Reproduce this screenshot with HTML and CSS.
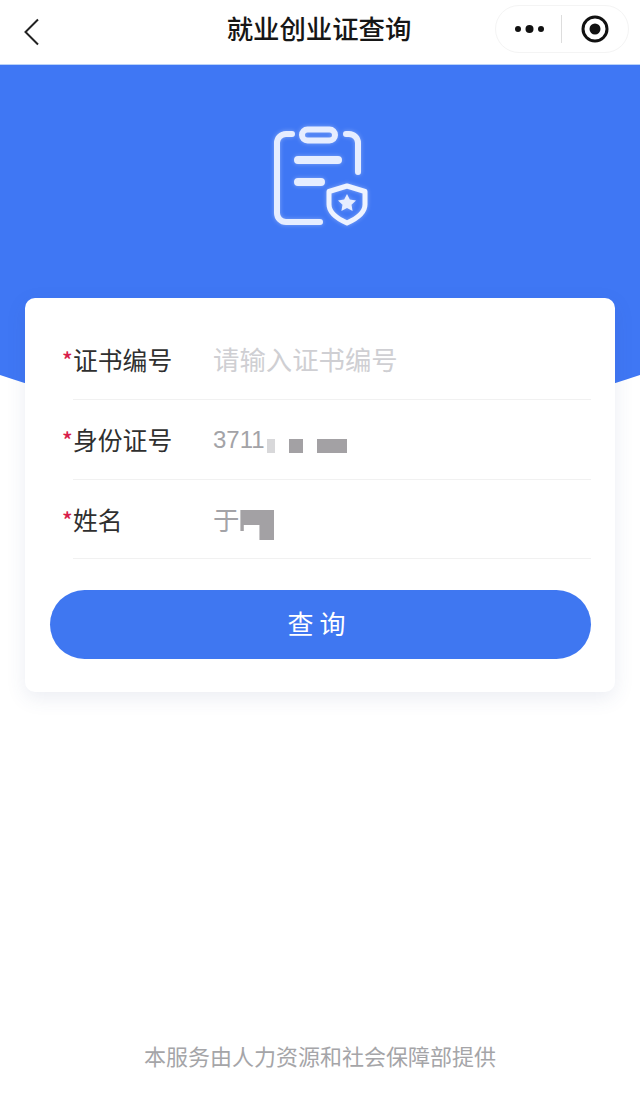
FILE: index.html
```html
<!DOCTYPE html>
<html lang="zh">
<head>
<meta charset="utf-8">
<title>就业创业证查询</title>
<link rel="stylesheet" href="styles.css">
</head>
<body>
<header class="nav">
  <svg class="back" width="20" height="30" viewBox="0 0 20 30"><path d="M16 2.500 3.500 15 16 27.500" fill="none" stroke="#222" stroke-width="2"/></svg>
  <h1 class="title">就业创业证查询</h1>
  <div class="capsule">
    <svg width="32" height="10" viewBox="0 0 32 10"><circle cx="4" cy="5" r="3" fill="#111"/><circle cx="15.500" cy="5" r="4" fill="#111"/><circle cx="27" cy="5" r="3" fill="#111"/></svg>
    <span class="divider"></span>
    <svg width="30" height="30" viewBox="0 0 30 30"><circle cx="15" cy="15" r="12" fill="none" stroke="#111" stroke-width="3"/><circle cx="15" cy="15" r="5.500" fill="#111"/></svg>
  </div>
</header>
<main class="page">
  <section class="hero">
    <svg class="hero-icon" width="100" height="102" viewBox="270 125 100 102">
      <g fill="none" stroke="#e6edff" stroke-width="6" stroke-linecap="round" stroke-linejoin="round">
        <path d="M292 134h-6a9 9 0 0 0-9 9v70a9 9 0 0 0 9 9h34"/>
        <path d="M346 134h3a9 9 0 0 1 9 9v29"/>
        <rect x="302" y="129.500" width="33" height="11" rx="5.500"/>
        <path d="M298 160h40M298 182h23" stroke-width="8"/>
        <path d="M347 186l18 5.500v13c0 8-8 14-18 18.500-10-4.500-18-10.500-18-18.500v-13z" stroke="#eef3ff" stroke-width="5"/>
      </g>
      <path d="M347 194l2.800 5.600 6.200.8-4.500 4.300 1.100 6.300-5.600-3-5.600 3 1.100-6.300-4.500-4.300 6.200-.8z" fill="#e6edff"/>
    </svg>
  </section>
  <section class="card">
    <div class="row">
      <label class="label"><span class="req">*</span>证书编号</label>
      <span class="value placeholder">请输入证书编号</span>
    </div>
    <div class="row">
      <label class="label"><span class="req">*</span>身份证号</label>
      <span class="value"><span class="digits">3711</span><i class="mask m1"></i><i class="mask m2"></i><i class="mask m3"></i></span>
    </div>
    <div class="row">
      <label class="label"><span class="req">*</span>姓名</label>
      <span class="value name">于<i class="mask m4"></i></span>
    </div>
    <button class="submit"><span class="submit-text">查 询</span></button>
  </section>
  <footer class="foot">本服务由人力资源和社会保障部提供</footer>
</main>
</body>
</html>
```
FILE: styles.css
```css
* { box-sizing: border-box; }
html, body { margin: 0; height: 1094px; overflow: hidden; background: #fff; }
body { font-family: "Noto Sans CJK SC", "Liberation Sans", sans-serif; }
.nav { height: 65px; position: relative; display: flex; align-items: center; justify-content: center; background: #fff; border-bottom: 1px solid #b9d2f8; }
.back { position: absolute; left: 22px; top: 17px; }
.title { margin: 0 0 8px -2px; font-size: 26.400px; font-weight: 500; color: #161616; line-height: 1; }
.capsule { position: absolute; left: 495px; top: 5px; width: 134px; height: 48px; border: 1px solid #f4f4f4; border-radius: 24px; display: flex; align-items: center; padding-left: 18px; }
.divider { width: 1px; height: 28px; background: #ddd; margin: 0 18px 0 15px; }
.page { position: relative; height: 1029px; display: flex; flex-direction: column; align-items: center; }
.hero { position: absolute; left: 0; top: 0; width: 640px; height: 360px; background: #3f77f4; clip-path: ellipse(630px 360px at 50% 0); display: flex; justify-content: center; align-items: flex-start; padding-top: 60px; }
.hero-icon { filter: blur(.5px) drop-shadow(0 0 2px rgba(255,255,255,.35)); }
.card { position: relative; margin-top: 233px; width: 590px; height: 394px; background: #fff; border-radius: 10px; box-shadow: 0 6px 20px rgba(60,80,140,.1); padding: 22px 24px 0 25px; }
.row { height: 80px; margin-left: 23px; border-bottom: 1px solid #f1f1f1; display: flex; align-items: center; position: relative; }
.row:nth-child(3) { height: 79px; }
.label { position: absolute; left: -11px; font-size: 24.800px; color: #2f2f2f; line-height: 1; display: flex; }
.req { color: #d81e4a; font-size: 22px; font-weight: 500; width: 11px; line-height: 24px; }
.value { margin-left: 140px; font-size: 26.400px; color: #a3a3a7; line-height: 1; display: flex; align-items: center; }
.placeholder { color: #cfcfd3; }
.digits { font-family: "Liberation Sans", sans-serif; font-size: 24px; }
.mask { display: block; background: #a3a1a4; flex: none; }
.m1 { width: 8px; height: 14px; background: #d8d8da; margin: 12px 0 0 2px; }
.m2 { width: 14px; height: 14px; margin: 12px 0 0 14px; }
.m3 { width: 30px; height: 14px; margin: 12px 0 0 14px; }
.m4 { width: 34px; height: 30px; margin: 12px 0 0 1px; clip-path: polygon(0 0,100% 0,100% 100%,56% 100%,56% 50%,10% 50%,10% 70%,0 70%); }
.submit { display: block; width: 541px; height: 69px; margin-top: 31px; padding: 0 8px 0 0; border: 0; border-radius: 35px; background: #3f77f1; color: #fff; font: 26px "Noto Sans CJK SC", "Liberation Sans", sans-serif; }
.submit-text { position: relative; top: -2px; }
.foot { position: absolute; top: 979px; font-size: 22px; color: #a5a5a8; line-height: 1; left: 0; right: 0; text-align: center; }
```
